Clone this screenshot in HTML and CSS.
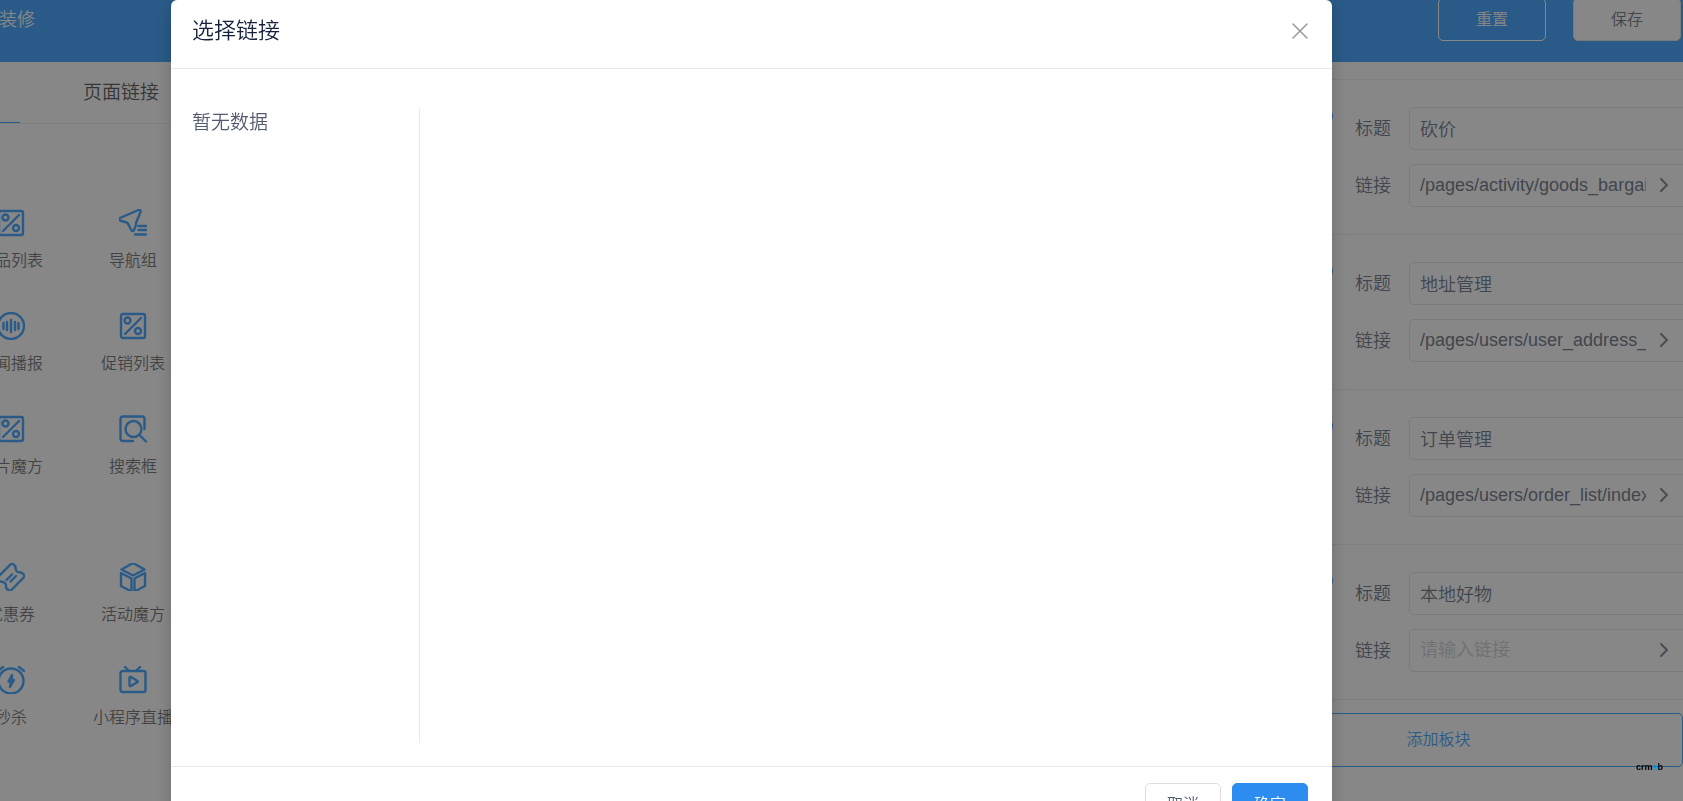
FILE: index.html
```html
<!DOCTYPE html>
<html lang="zh-CN">
<head>
<meta charset="utf-8">
<title>页面装修</title>
<link rel="stylesheet" href="styles.css">
</head>
<body>
<svg class="sprite" aria-hidden="true">
  <symbol id="i-percent" viewBox="0 0 28 28"><rect x="2" y="2" width="24" height="24" rx="2"/><circle cx="8.500" cy="8.500" r="3"/><circle cx="19" cy="19" r="3"/><path d="M22 6 6 22"/></symbol>
  <symbol id="i-nav" viewBox="0 0 28 28"><path d="M17 14 21.500 3Q22 .5 19.500 1L1 9Q-1 10.500 1 11.500L7.500 13.500Q9 14 9.500 15.500L12.500 21.500Q14 23 15 21L17 16M19.500 17H27M19.500 21H27M16 25.500H27"/></symbol>
  <symbol id="i-voice" viewBox="0 0 28 28"><circle cx="14" cy="14" r="13"/><path d="M6.500 11v6M10 10v8M14 8v12M18 10v8M21.500 11v6"/></symbol>
  <symbol id="i-search" viewBox="0 0 28 28"><path d="M14 26H4Q1.500 26 1.500 23.500V4Q1.500 1.500 4 1.500H23Q25.500 1.500 25.500 4V14M20 19.500 27 26.500"/><circle cx="14.500" cy="14" r="8"/></symbol>
  <symbol id="i-coupon" viewBox="0 0 28 28"><path d="M15 0 18.500 3.500Q18 10 24.500 9.500L28 13 13 28.500 9 25Q10 18.500 3 18.500L0 15ZM9.500 17 15 11.500M13.500 18.500 19 13"/></symbol>
  <symbol id="i-cube" viewBox="0 0 28 28"><path d="M14 0 25.500 6.500 14 12.500 2.500 6.500ZM2 10 12.500 15.500V28.500L2 23ZM26 10 15.500 15.500V28.500L26 23Z"/></symbol>
  <symbol id="i-clock" viewBox="0 0 28 28"><circle cx="14" cy="15" r="12.500"/><path d="M1 5 6 1M22 1 27 5"/><path d="M15 9 11.500 15.500H14L13 21 17 14H14.500Z"/></symbol>
  <symbol id="i-live" viewBox="0 0 28 28"><rect x="1.500" y="5" width="25" height="21" rx="2"/><path d="M6 1 10 5M21 1 17 5M10.500 12Q10.500 10.500 12 11L18.500 15Q19 15.500 18.500 16L12 20Q10.500 20.500 10.500 19Z"/></symbol>
  <symbol id="i-right" viewBox="0 0 10 14"><path d="M2 1 8 7 2 13"/></symbol>
</svg>

<div class="page">
  <header class="topbar">
    <h1 class="topbar-title">装修</h1>
    <div class="topbar-actions">
      <button class="btn btn-ghost" type="button">重置</button>
      <button class="btn btn-save" type="button">保存</button>
    </div>
  </header>
  <div class="workspace">
    <aside class="sidebar">
      <nav class="tabs"><a class="tab tab-active" href="#"></a><a class="tab" href="#">页面链接</a></nav>
      <div class="widgets">
        <div class="widget"><svg class="icon"><use href="#i-percent"/></svg><span>商品列表</span></div>
        <div class="widget"><svg class="icon"><use href="#i-nav"/></svg><span>导航组</span></div>
        <div class="widget"><svg class="icon"><use href="#i-voice"/></svg><span>新闻播报</span></div>
        <div class="widget"><svg class="icon"><use href="#i-percent"/></svg><span>促销列表</span></div>
        <div class="widget"><svg class="icon"><use href="#i-percent"/></svg><span>图片魔方</span></div>
        <div class="widget"><svg class="icon"><use href="#i-search"/></svg><span>搜索框</span></div>
      </div>
      <div class="widgets">
        <div class="widget"><svg class="icon"><use href="#i-coupon"/></svg><span>优惠券</span></div>
        <div class="widget"><svg class="icon"><use href="#i-cube"/></svg><span>活动魔方</span></div>
        <div class="widget"><svg class="icon"><use href="#i-clock"/></svg><span>秒杀</span></div>
        <div class="widget"><svg class="icon"><use href="#i-live"/></svg><span>小程序直播</span></div>
      </div>
    </aside>
    <section class="panel">
      <div class="block">
        <button class="remove" type="button" aria-label="删除"></button>
        <div class="field"><label for="t1">标题</label><input id="t1" class="input" value="砍价"></div>
        <div class="field"><label for="l1">链接</label><div class="input input-link"><input id="l1" value="/pages/activity/goods_bargain/index"><svg class="chevron"><use href="#i-right"/></svg></div></div>
      </div>
      <div class="block">
        <button class="remove" type="button" aria-label="删除"></button>
        <div class="field"><label for="t2">标题</label><input id="t2" class="input" value="地址管理"></div>
        <div class="field"><label for="l2">链接</label><div class="input input-link"><input id="l2" value="/pages/users/user_address_list/index"><svg class="chevron"><use href="#i-right"/></svg></div></div>
      </div>
      <div class="block">
        <button class="remove" type="button" aria-label="删除"></button>
        <div class="field"><label for="t3">标题</label><input id="t3" class="input" value="订单管理"></div>
        <div class="field"><label for="l3">链接</label><div class="input input-link"><input id="l3" value="/pages/users/order_list/index"><svg class="chevron"><use href="#i-right"/></svg></div></div>
      </div>
      <div class="block">
        <button class="remove" type="button" aria-label="删除"></button>
        <div class="field"><label for="t4">标题</label><input id="t4" class="input" value="本地好物"></div>
        <div class="field"><label for="l4">链接</label><div class="input input-link"><input id="l4" placeholder="请输入链接"><svg class="chevron"><use href="#i-right"/></svg></div></div>
      </div>
      <div class="add-row"><button class="add" type="button">添加板块</button></div>
    </section>
  </div>
</div>

<div class="overlay">
  <div class="modal" role="dialog" aria-labelledby="dlg-title">
    <div class="modal-head">
      <h2 class="modal-title" id="dlg-title">选择链接</h2>
      <button class="close" type="button" aria-label="关闭"><svg viewBox="0 0 16 16"><path d="M1 1 15 15M15 1 1 15"/></svg></button>
    </div>
    <div class="modal-body"><div class="tree">暂无数据</div></div>
    <div class="modal-foot">
      <button class="btn btn-cancel" type="button">取消</button>
      <button class="btn btn-ok" type="button">确定</button>
    </div>
  </div>
</div>
<div class="brand">crm<span class="brand-e">e</span>b</div>
</body>
</html>
```
FILE: styles.css
```css
* { box-sizing: border-box; }
html, body { height: 100%; }
body {
  margin: 0;
  overflow: hidden;
  background: #fff;
  color: #515a6e;
  font: 350 16px/22px "Liberation Sans", "Noto Sans CJK SC DemiLight", "Noto Sans CJK SC", sans-serif;
}
button, input { font: inherit; color: inherit; }
h1, h2 { margin: 0; font-weight: inherit; }
.sprite { position: absolute; width: 0; height: 0; }
symbol, .icon, .chevron, .close svg {
  fill: none;
  stroke-linecap: round;
  stroke-linejoin: round;
}

/* The page is shown scrolled down by part of the top bar */
.page { margin-top: -23px; }
.topbar {
  display: flex;
  align-items: center;
  justify-content: space-between;
  height: 85px;
  padding-right: 2px;
  background: #1890ff;
  color: #fff;
}
.topbar-title { margin-left: -1px; font-size: 18px; line-height: 24px; }
.topbar-actions { display: flex; gap: 27px; }
.btn {
  height: 43px;
  padding: 0 20px;
  border: 1px solid #dcdee2;
  border-radius: 5px;
  background: #fff;
  color: #515a6e;
}
.btn-ghost, .btn-save { width: 108px; }
.btn-ghost { border-color: #fff; background: transparent; color: #fff; }
.workspace { display: flex; justify-content: space-between; }

.sidebar { width: 194px; overflow: hidden; }
.tabs {
  display: flex;
  height: 62px;
  border-bottom: 1px solid #e8eaec;
}
.tab {
  padding: 19px 0 18px;
  margin-left: 63px;
  color: #333;
  font-size: 19px;
  line-height: 24px;
  text-decoration: none;
}
.tab-active { width: 20px; margin-left: 0; border-bottom: 1px solid #1890ff; }
.widgets {
  display: grid;
  grid-template-columns: 122px 122px;
  row-gap: 40px;
  margin: 85px 0 0 -50px;
}
.widget {
  display: flex;
  flex-direction: column;
  align-items: center;
  gap: 13px;
  color: #555;
  white-space: nowrap;
}
.icon { width: 28px; height: 28px; overflow: visible; stroke: #1890ff; stroke-width: 2.4; }

.panel { width: 489px; padding-top: 17px; overflow: hidden; }
.block {
  position: relative;
  display: flex;
  flex-direction: column;
  gap: 14px;
  padding: 27px 0 27px 161px;
  border-top: 1px solid #e8eaec;
  font-size: 18px;
}
.remove {
  position: absolute;
  left: 121px;
  top: 27px;
  width: 18px;
  height: 18px;
  padding: 0;
  border: 0;
  border-radius: 50%;
  background: #1890ff;
}
.field { display: flex; align-items: center; gap: 18px; }
.field label { flex: none; width: 36px; }
.input {
  flex: none;
  width: 290px;
  height: 43px;
  padding: 0 10px 2px;
  border: 1px solid #dcdee2;
  border-radius: 5px;
  background: transparent;
}
.input-link { display: flex; align-items: center; gap: 13px; }
.input-link input {
  width: 226px;
  padding: 0;
  border: 0;
  background: transparent;
  outline: 0;
}
.input-link input::placeholder { color: #c5c8ce; opacity: 1; }
.chevron { width: 10px; height: 14px; stroke: #676e80; stroke-width: 2; }
.add-row { padding-top: 13px; border-top: 1px solid #e8eaec; }
.add {
  width: 100%;
  height: 54px;
  border: 1px solid #1890ff;
  border-radius: 5px;
  background: transparent;
  color: #1890ff;
}

.overlay {
  position: fixed;
  inset: 0;
  padding: 0 351px 0 171px;
  overflow: hidden;
  background: rgba(55, 55, 55, .6);
}
.modal {
  border-radius: 6px;
  background: #fff;
  box-shadow: 0 4px 16px rgba(0, 0, 0, .2);
}
.modal-head {
  display: flex;
  align-items: center;
  justify-content: space-between;
  padding: 16px 24px 22px 21px;
  border-bottom: 1px solid #e8eaec;
}
.modal-title { color: #17233d; font-size: 22px; line-height: 30px; }
.close { width: 16px; height: 16px; padding: 0; border: 0; background: none; }
.close svg { display: block; stroke: #999; stroke-width: 1.5; }
.modal-body { padding: 39px 21px 23px; }
.tree {
  width: 228px;
  min-height: 635px;
  border-right: 1px solid #e8eaec;
  font-size: 19px;
  line-height: 30px;
}
.modal-foot {
  display: flex;
  justify-content: flex-end;
  gap: 11px;
  padding: 16px 24px;
  border-top: 1px solid #e8eaec;
}
.modal-foot .btn { width: 76px; }
.modal-foot .btn-ok { border-color: #2d8cf0; background: #2d8cf0; color: #fff; }

.brand {
  position: fixed;
  right: 20px;
  bottom: 28px;
  color: #000;
  font-size: 9px;
  font-weight: 700;
  line-height: 12px;
}
.brand-e { color: #00a0f0; }
```
